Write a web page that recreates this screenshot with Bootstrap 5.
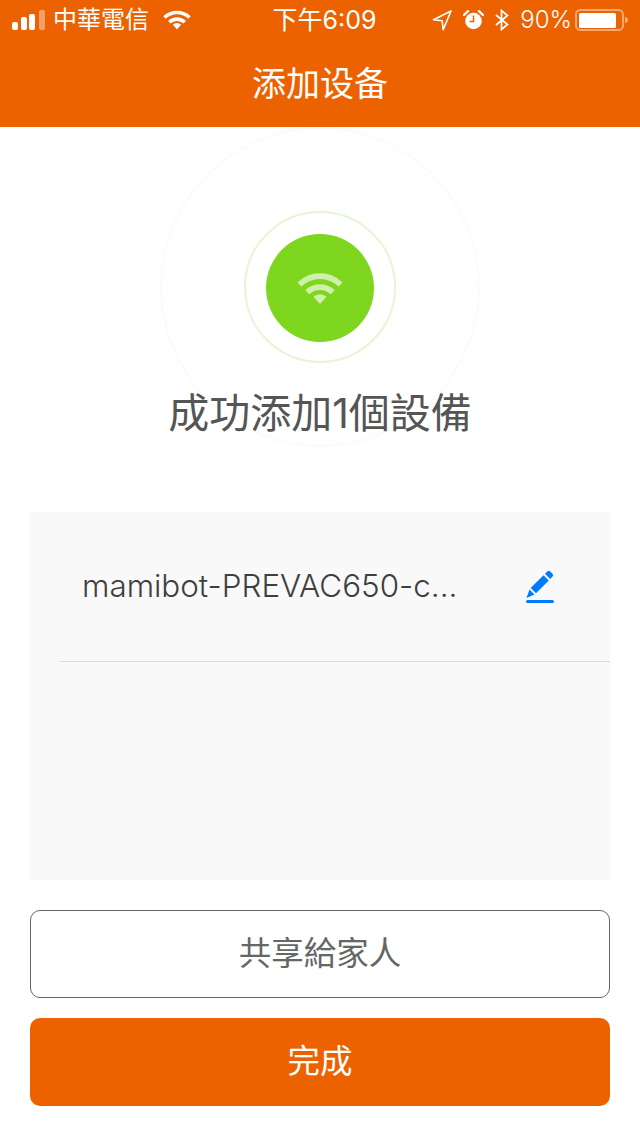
<!DOCTYPE html>
<html lang="zh-Hant">
<head>
  <meta charset="UTF-8">
  <title>添加设备</title>
  <link href="https://cdn.jsdelivr.net/npm/bootstrap@5.3.0/dist/css/bootstrap.min.css" rel="stylesheet">
  <style>
    body { font-family: "Inter", "Noto Sans CJK TC", sans-serif; background: #fff; color: #4a4a4a; width: 640px; height: 1136px; overflow: hidden; }
    .app-header { background: #ec6200; color: #fff; height: 127px; }
    .status-bar { height: 40px; padding: 0 11px 0 12px; }
    .status-side { flex: 1 1 0; }
    .carrier { font-size: 24px; line-height: 40px; margin-left: 7px; margin-right: 14px; }
    .clock { font-size: 25px; line-height: 40px; margin-left: 8px; }
    .percent { font-size: 24px; font-weight: 300; line-height: 40px; margin-left: 11px; margin-right: 3px; }
    .icon-gap { margin-left: 11px; }
    .page-title { font-size: 34px; line-height: 87px; height: 87px; margin-top: 0; padding-bottom: 4px; }
    .hero { height: 385px; }
    .ring-outer { width: 320px; height: 320px; border-radius: 50%; border: 2px solid #fafdf7; }
    .ring-mid { width: 152px; height: 152px; border-radius: 50%; border: 2px solid #e5f6d4; padding-top: 2px; }
    .ring-core { width: 108px; height: 108px; border-radius: 50%; background: #7fd61f; }
    .success-text { font-size: 41px; line-height: 56px; margin-top: -62px; position: relative; white-space: nowrap; color: #555; }
    .device-panel { background: #f9f9f9; height: 368px; margin: 0 30px; }
    .device-row { height: 150px; margin-left: 30px; border-bottom: 1px solid #dcdcdc; padding: 0 55px 0 22px; }
    .device-name { font-size: 31.4px; font-weight: 300; line-height: 40px; color: #3f3f3f; margin-bottom: 2px; }
    .actions { margin: 30px 30px 0; }
    .btn-share, .btn-share:hover { height: 88px; border: 1px solid #666; border-radius: 10px; background: #fff; color: #666; font-size: 32.5px; }
    .btn-done, .btn-done:hover { height: 88px; border: 0; border-radius: 10px; background: #ec6200; color: #fff; font-size: 32.5px; margin-top: 20px; }
  </style>
</head>
<body>
  <header class="app-header">
    <div class="status-bar d-flex align-items-center">
      <div class="status-side d-flex align-items-center">
        <svg width="34" height="20" viewBox="0 0 34 20" fill="#fff">
          <rect x="0" y="12" width="6" height="8" rx="2"/>
          <rect x="9" y="7" width="6" height="13" rx="2"/>
          <rect x="17" y="4" width="6" height="16" rx="2"/>
          <rect x="27" y="0" width="6" height="20" rx="2" opacity=".4"/>
        </svg>
        <span class="carrier">中華電信</span>
        <svg width="28" height="20" viewBox="0 0 28 20" fill="none" stroke="#fff" stroke-width="3.6">
          <path d="M1.500 7.500a18 18 0 0 1 25 0"/>
          <path d="M6.300 12.300a11 11 0 0 1 15.400 0"/>
          <path d="M9.800 14.600 14 19.600l4.200-5a6 6 0 0 0-8.400 0z" fill="#fff" stroke="none"/>
        </svg>
      </div>
      <span class="clock">下午6:09</span>
      <div class="status-side d-flex align-items-center justify-content-end">
        <svg width="20" height="21" viewBox="0 0 20 21" fill="none" stroke="#fff" stroke-width="1.600" stroke-linejoin="round">
          <path d="M19 1 1.500 9.700l8.700 1 1 9z"/>
        </svg>
        <svg class="icon-gap" width="21" height="20" viewBox="0 0 21 20">
          <path d="M1 5 5 1.200M20 5 16 1.200" stroke="#fff" stroke-width="2.400" stroke-linecap="round"/>
          <circle cx="10.500" cy="11" r="8.300" fill="#fff"/>
          <path d="M10.500 5.500v6h-4" fill="none" stroke="#ec6200" stroke-width="1.500"/>
        </svg>
        <svg class="icon-gap" width="14" height="22" viewBox="0 0 14 22" fill="none" stroke="#fff" stroke-width="1.700">
          <path d="M1 6 12.500 15.500 6.500 20.500V1.500l6 5L1 16"/>
        </svg>
        <span class="percent">90%</span>
        <svg width="54" height="24" viewBox="0 0 54 24">
          <rect x="1" y="2" width="47" height="20" rx="4.500" fill="none" stroke="#fff" stroke-opacity=".45" stroke-width="2"/>
          <rect x="4" y="5" width="37" height="15" rx="1.500" fill="#fff"/>
          <path d="M50 9c2 .5 3 1.500 3 3s-1 2.500-3 3z" fill="#fff" fill-opacity=".5"/>
        </svg>
      </div>
    </div>
    <h1 class="page-title fw-normal text-center mb-0">添加设备</h1>
  </header>

  <section class="hero d-flex flex-column align-items-center">
    <div class="ring-outer d-flex align-items-center justify-content-center flex-shrink-0">
      <div class="ring-mid d-flex align-items-center justify-content-center">
        <div class="ring-core d-flex align-items-center justify-content-center">
          <svg width="46" height="33" viewBox="0 0 28 20" fill="none" stroke="#cff0ad" stroke-width="3.400">
            <path d="M1.500 7.500a18 18 0 0 1 25 0"/>
            <path d="M6.300 12.300a11 11 0 0 1 15.400 0"/>
            <path d="M10 15 14 19.500 18 15a6 6 0 0 0-8 0z" fill="#cff0ad" stroke="none"/>
          </svg>
        </div>
      </div>
    </div>
    <div class="success-text">成功添加1個設備</div>
  </section>

  <section class="device-panel">
    <div class="device-row d-flex align-items-center justify-content-between">
      <span class="device-name">mamibot-PREVAC650-c...</span>
      <svg width="30" height="34" viewBox="0 0 30 34" fill="#007aff">
        <path d="M1.500 28 4.500 19.500 9.500 24.500z"/>
        <path d="M5.700 18 18.500 5.200 23.800 10.500 11 23.300z"/>
        <path d="M20 3.700 22.300 1.400a2 2 0 0 1 2.800 0l2.400 2.400a2 2 0 0 1 0 2.800L25.200 9z"/>
        <rect x="1" y="30" width="28" height="3" rx="1.500"/>
      </svg>
    </div>
  </section>

  <div class="actions">
    <button type="button" class="btn btn-share w-100 d-block">共享給家人</button>
    <button type="button" class="btn btn-done w-100 d-block">完成</button>
  </div>
</body>
</html>
